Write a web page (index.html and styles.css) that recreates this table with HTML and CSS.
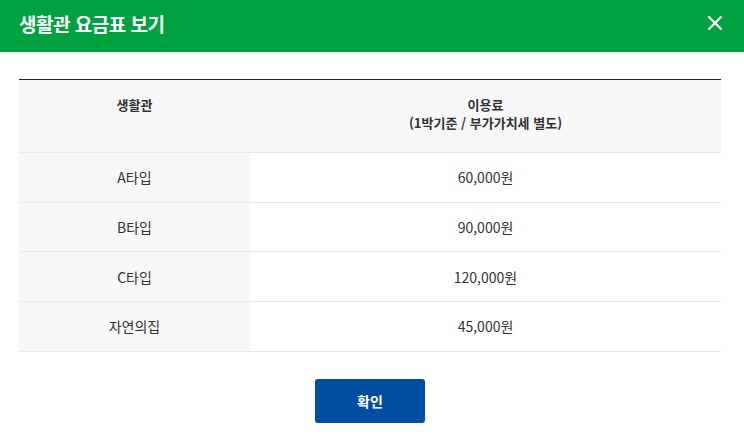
FILE: index.html
```html
<!DOCTYPE html>
<html lang="ko">
<head>
<meta charset="utf-8">
<title>생활관 요금표 보기</title>
<link rel="stylesheet" href="styles.css">
</head>
<body>
<div class="modal">
  <header class="modal-head">
    <h1 class="modal-title">생활관 요금표 보기</h1>
    <button class="close" aria-label="닫기">
      <svg width="14" height="14" viewBox="0 0 14 14"><path d="M1 1L13 13M13 1L1 13" stroke="#fff" stroke-width="2.2" stroke-linecap="square"/></svg>
    </button>
  </header>
  <div class="modal-body">
    <table class="fee">
      <thead>
        <tr><th class="c1">생활관</th><th>이용료<br>(1박기준 / 부가가치세 별도)</th></tr>
      </thead>
      <tbody>
        <tr><td class="c1">A타입</td><td>60,000원</td></tr>
        <tr><td class="c1">B타입</td><td>90,000원</td></tr>
        <tr><td class="c1">C타입</td><td>120,000원</td></tr>
        <tr><td class="c1">자연의집</td><td>45,000원</td></tr>
      </tbody>
    </table>
    <div class="actions"><button class="ok">확인</button></div>
  </div>
</div>
</body>
</html>
```
FILE: styles.css
```css
html, body { margin: 0; padding: 0; background: #fff; }
body { font-family: "Noto Sans CJK KR", "Noto Sans", sans-serif; color: #333; }
.modal { width: 744px; }
.modal-head {
  height: 52px; background: #00a23f; display: flex; align-items: center;
  justify-content: space-between; padding: 0 22px 0 19px; box-sizing: border-box;
}
.modal-title { margin: 0; font-size: 19px; font-weight: 700; color: #fff; letter-spacing: -0.5px; line-height: 1; position: relative; top: -3px; }
.close { background: none; border: 0; padding: 0; width: 14px; height: 14px; display: flex; cursor: pointer; position: relative; top: -3px; }
.modal-body { padding: 27px 23px 0 19px; }
.fee { width: 702px; border-collapse: collapse; border-top: 1px solid #222; font-size: 13px; }
.fee th, .fee td { text-align: center; border-bottom: 1px solid #e8e8e8; padding: 0; }
.fee th { height: 73px; background: #f7f7f7; font-weight: 700; color: #333; line-height: 18px; vertical-align: top; padding-top: 16px; box-sizing: border-box; }
.fee td { height: 48.67px; font-size: 14px; font-weight: 400; color: #333; }
.fee .c1 { width: 231px; background: #f7f7f7; }
.actions { display: flex; justify-content: center; padding-top: 27px; }
.ok {
  width: 110px; height: 44px; border: 0; border-radius: 3px; background: #004ea2;
  color: #fff; font-family: inherit; font-size: 14px; font-weight: 700;
}
```
